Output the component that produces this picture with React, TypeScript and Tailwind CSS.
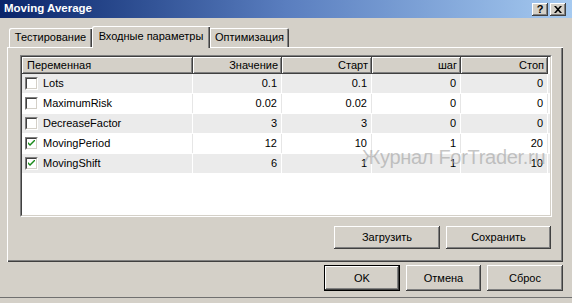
import React from "react";

const raised =
  "bg-[#d4d0c8] shadow-[inset_-1px_-1px_0_#404040,inset_1px_1px_0_#ffffff,inset_-2px_-2px_0_#808080]";

const rows = [
  { name: "Lots", v: "0.1", start: "0.1", step: "0", stop: "0", on: false },
  { name: "MaximumRisk", v: "0.02", start: "0.02", step: "0", stop: "0", on: false },
  { name: "DecreaseFactor", v: "3", start: "3", step: "0", stop: "0", on: false },
  { name: "MovingPeriod", v: "12", start: "10", step: "1", stop: "20", on: true },
  { name: "MovingShift", v: "6", start: "1", step: "1", stop: "10", on: true },
];

const cols = "grid grid-cols-[171px_89px_90px_89px_87px]";

const CheckBox = ({ on }: { on: boolean }) => (
  <div className="w-[13px] h-[13px] border border-t-[#808080] border-l-[#808080] border-b-white border-r-white">
    <div className="w-full h-full bg-white border border-t-[#404040] border-l-[#404040] border-b-[#d4d0c8] border-r-[#d4d0c8] flex items-center justify-center">
      {on && (
        <svg width="7" height="7" viewBox="0 0 7 7">
          <path d="M0 2 L0 4 L2 6 L7 1 L7 -1 L2 4 Z" fill="#1a8a1a" />
        </svg>
      )}
    </div>
  </div>
);

const Button = ({ label, w, h, def }: { label: string; w: string; h: string; def?: boolean }) => (
  <div className={`${w} ${h} ${def ? "border border-black" : ""}`}>
    <div className={`w-full h-full ${raised} flex items-center justify-center text-[11px] text-black`}>
      {label}
    </div>
  </div>
);

export default function App() {
  return (
    <div
      className="w-[572px] h-[303px] bg-[#d4d0c8] relative overflow-hidden flex flex-col text-black"
      style={{ fontFamily: '"Liberation Sans", Arial, sans-serif' }}
    >
      {/* title bar */}
      <div className="h-[18px] shrink-0 bg-gradient-to-r from-[#0a246a] via-[#5a7ebf] to-[#a6caf0] flex items-center justify-between pl-[4px] pr-[6px]">
        <span className="text-white font-bold text-[11.5px] leading-none">Moving Average</span>
        <div className="flex gap-[2px]">
          <div className={`w-[16px] h-[13px] ${raised} flex items-center justify-center text-[11px] font-bold leading-none`}>?</div>
          <div className={`w-[16px] h-[13px] ${raised} flex items-center justify-center`}>
            <svg width="8" height="7" viewBox="0 0 8 7">
              <path d="M0 0h2l2 2.2L6 0h2L5 3.5 8 7H6L4 4.8 2 7H0l3-3.5z" fill="#000" />
            </svg>
          </div>
        </div>
      </div>

      {/* tabs */}
      <div className="h-[29px] shrink-0 flex items-end pl-[9px]">
        <div className="w-[83px] h-[19px] rounded-tl-[2px] shadow-[inset_1px_1px_0_#ffffff,inset_-1px_0_0_#404040,inset_-2px_0_0_#808080] flex items-center justify-center text-[11px]">
          Тестирование
        </div>
        <div className="w-[118px] h-[22px] -mb-px relative z-10 bg-[#d4d0c8] rounded-tl-[2px] shadow-[inset_1px_1px_0_#ffffff,inset_-1px_0_0_#404040,inset_-2px_0_0_#808080] flex items-center justify-center text-[11px] pb-[2px]">
          Входные параметры
        </div>
        <div className="w-[79px] h-[19px] rounded-tr-[2px] shadow-[inset_1px_1px_0_#ffffff,inset_-1px_0_0_#404040,inset_-2px_0_0_#808080] flex items-center justify-center text-[11px]">
          Оптимизация
        </div>
      </div>

      {/* panel */}
      <div className="ml-[7px] w-[556px] h-[215px] shrink-0 flex flex-col pt-[8px] pl-[13px] shadow-[inset_1px_1px_0_#ffffff,inset_-1px_-1px_0_#404040,inset_-2px_-2px_0_#808080]">
        <div className="w-[532px] h-[162px] border border-t-[#808080] border-l-[#808080] border-b-white border-r-white">
          <div className="w-full h-full bg-white border border-t-[#404040] border-l-[#404040] border-b-[#d4d0c8] border-r-[#d4d0c8]">
            <div className={`${cols} h-[17px] text-[11px]`}>
              {["Переменная", "Значение", "Старт", "шаг", "Стоп"].map((h, i) => (
                <div
                  key={h}
                  className={`${raised} flex items-center ${i === 0 ? "pl-[5px]" : "justify-end pr-[4px]"}`}
                >
                  {h}
                </div>
              ))}
            </div>
            {rows.map((r, i) => {
              const odd = i % 2 === 0;
              const cell = `flex items-center justify-end pr-[4px] border-r ${odd ? "border-white" : "border-[#e6e6e6]"}`;
              return (
                <div
                  key={r.name}
                  className={`${cols} h-[20px] text-[11px] border-b border-white ${odd ? "bg-[#ebebeb]" : "bg-white"}`}
                >
                  <div className={`flex items-center gap-[5px] pl-[3px] border-r ${odd ? "border-white" : "border-[#e6e6e6]"}`}>
                    <CheckBox on={r.on} />
                    <span>{r.name}</span>
                  </div>
                  <div className={cell}>{r.v}</div>
                  <div className={cell}>{r.start}</div>
                  <div className={cell}>{r.step}</div>
                  <div className={cell}>{r.stop}</div>
                </div>
              );
            })}
          </div>
        </div>
        <div className="flex justify-end gap-[6px] mt-[9px] pr-[12px]">
          <Button label="Загрузить" w="w-[106px]" h="h-[23px]" />
          <Button label="Сохранить" w="w-[105px]" h="h-[23px]" />
        </div>
      </div>

      {/* dialog buttons */}
      <div className="h-[35px] shrink-0 flex justify-end gap-[6px] pt-[3px] pr-[9px]">
        <Button label="OK" w="w-[76px]" h="h-[26px]" def />
        <Button label="Отмена" w="w-[75px]" h="h-[26px]" />
        <Button label="Сброс" w="w-[76px]" h="h-[26px]" />
      </div>

      <div className="flex-1 border-t border-[#707070] bg-[#d4d0c8]" />

      {/* watermark */}
      <div className="absolute left-[362px] top-[147px] text-[20px] leading-none text-[#a0a0a0]/60 tracking-[-0.3px] pointer-events-none">
        Журнал ForTrader.ru
      </div>
    </div>
  );
}
